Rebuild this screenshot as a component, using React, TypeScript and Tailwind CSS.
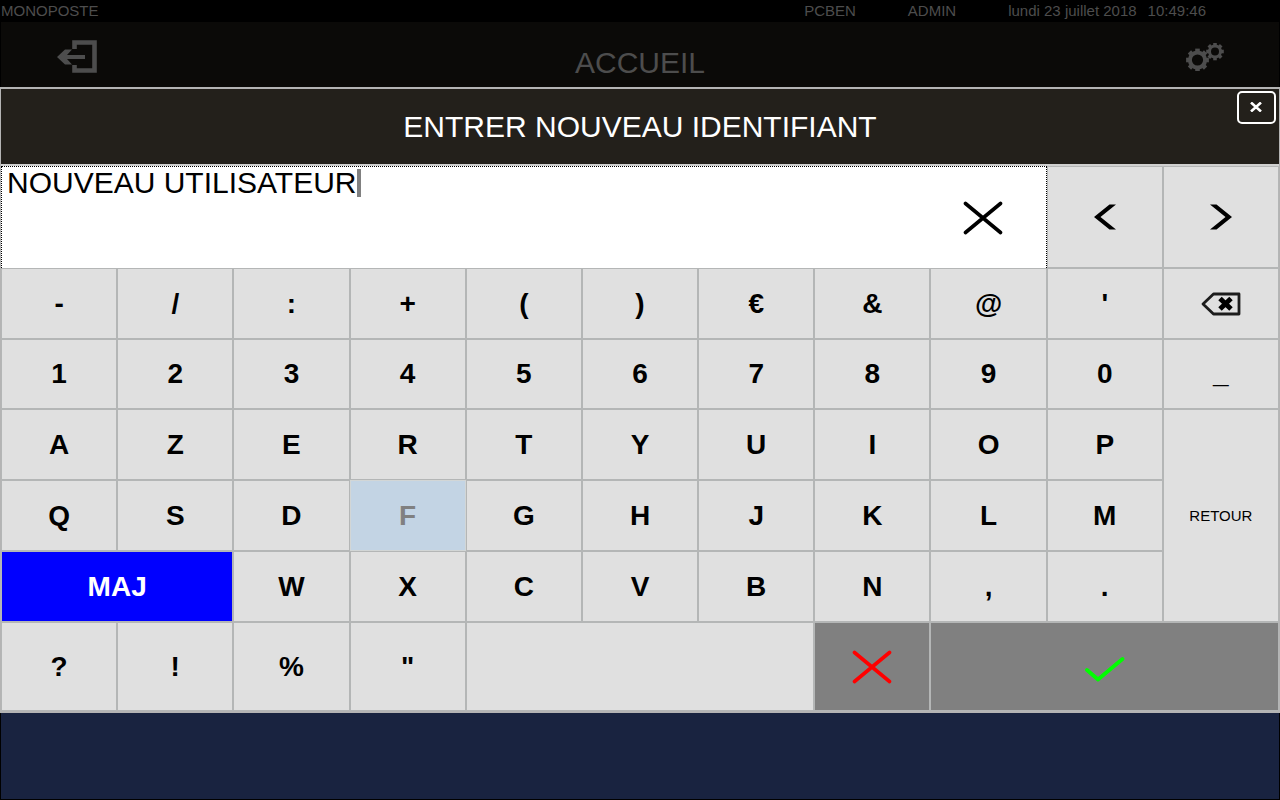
import { useState, type ReactNode } from "react";

type Key = {
  label: string;
  name?: string;
  icon?: ReactNode;
  className?: string;
  tone?: "normal" | "pressed" | "shift" | "dark" | "small";
};

const base = "flex min-w-0 items-center justify-center border leading-8";

const tones = {
  normal: "border-[#b4b6b6] bg-[#e0e0e0] text-[28px] font-bold text-black",
  pressed: "border-[#d2d6d6] bg-[#c3d4e4] text-[28px] font-bold text-[#808080]",
  shift: "border-[#b4b6b6] bg-[#0000ff] text-[28px] font-bold text-white",
  dark: "border-[#b4b6b6] bg-[#808080] text-[28px] font-bold text-white",
  small: "border-[#b4b6b6] bg-[#e0e0e0] text-[15px] font-normal text-black",
};

function CrossIcon({ color }: { color: string }) {
  return (
    <svg width="40" height="34" viewBox="0 0 40 34" fill="none" stroke={color} strokeWidth="3.6" strokeLinecap="round" aria-hidden="true">
      <path d="M2.500 2.500L37.500 31.500M37.500 2.500L2.500 31.500" />
    </svg>
  );
}

function CheckIcon() {
  return (
    <svg width="40" height="34" viewBox="0 0 40 34" fill="none" stroke="#00ff00" strokeWidth="3.8" strokeLinecap="round" strokeLinejoin="round" aria-hidden="true">
      <path d="M2 20L13 29.500L37.500 9" />
    </svg>
  );
}

function BackspaceIcon() {
  return (
    <svg width="40" height="24" viewBox="0 0 40 24" fill="none" aria-hidden="true">
      <path d="M2 12L12.500 2H38V22H12.500Z" stroke="#1c1c1c" strokeWidth="2.800" strokeLinejoin="round" />
      <path d="M19 6.500L30 17M30 6.500L19 17" stroke="#000" strokeWidth="5" />
    </svg>
  );
}

function Chevron({ flipped }: { flipped?: boolean }) {
  return (
    <svg width="22" height="26" viewBox="0 0 22 26" fill="#000" aria-hidden="true">
      <path d={flipped ? "M0 0.500H6.500L22 13L6.500 25.500H0L15.500 13Z" : "M22 0.500H15.500L0 13L15.500 25.500H22L6.500 13Z"} />
    </svg>
  );
}

function ExitIcon() {
  return (
    <svg width="42" height="34" viewBox="0 0 42 34" aria-hidden="true">
      <path d="M18.500 9V2.500H38.500V30.500H18.500V25" fill="none" stroke="#4d4d4d" strokeWidth="4.600" />
      <path d="M1 17L9 9.500H16L11 15H29V19H11L16 24.500H9Z" fill="#4d4d4d" />
    </svg>
  );
}

function Gear({ cx, cy, r, band, tooth }: { cx: number; cy: number; r: number; band: number; tooth: number }) {
  return (
    <g transform={`translate(${cx} ${cy})`}>
      <circle r={r} fill="none" stroke="#4d4d4d" strokeWidth={band} />
      {[0, 45, 90, 135, 180, 225, 270, 315].map((angle) => (
        <rect key={angle} x={-tooth / 2} y={-r - band / 2 - 1.8} width={tooth} height={3} fill="#4d4d4d" transform={`rotate(${angle})`} />
      ))}
    </g>
  );
}

function GearsIcon() {
  return (
    <svg width="38" height="28" viewBox="0 0 38 28" aria-hidden="true">
      <Gear cx={11.5} cy={17} r={7.6} band={4} tooth={4.6} />
      <Gear cx={29} cy={8.5} r={5.5} band={3} tooth={3.6} />
    </svg>
  );
}

const chars = (text: string): Key[] => [...text].map((label) => ({ label }));

const keys: Key[] = [
  ...chars("-/:+()€&@'"),
  { label: "", name: "Effacer", icon: <BackspaceIcon /> },
  ...chars("1234567890_"),
  ...chars("AZERTYUIOP"),
  { label: "RETOUR", tone: "small", className: "row-span-3" },
  ...chars("QSD"),
  { label: "F", tone: "pressed" },
  ...chars("GHJKLM"),
  { label: "MAJ", tone: "shift", className: "col-span-2" },
  ...chars("WXCVBN,."),
  ...chars('?!%"'),
  { label: " ", name: "Espace", className: "col-span-3" },
  { label: "", name: "Annuler", icon: <CrossIcon color="#ff0000" />, tone: "dark" },
  { label: "", name: "Valider", icon: <CheckIcon />, tone: "dark", className: "col-span-3" },
];

export default function App() {
  const [value, setValue] = useState("NOUVEAU UTILISATEUR");

  const press = (key: Key) => {
    if (key.name === "Effacer") setValue(value.slice(0, -1));
    else if (key.label.length === 1) setValue(value + key.label);
  };

  return (
    <div className="flex min-h-screen flex-col bg-black font-['Liberation_Sans',Arial,sans-serif]">
      <div className="flex h-[22px] items-center pr-[74px] pl-px text-[15px] leading-5 text-[#4d4d4d]">
        <span className="mr-auto">MONOPOSTE</span>
        <span>PCBEN</span>
        <span className="ml-[52px]">ADMIN</span>
        <span className="ml-[52px]">lundi 23 juillet 2018</span>
        <span className="ml-[11px]">10:49:46</span>
      </div>

      <header className="mx-px grid h-[65px] grid-cols-[1fr_auto_1fr] items-center bg-[#0b0a08] px-[55px]">
        <button type="button" aria-label="Quitter" className="justify-self-start pt-1">
          <ExitIcon />
        </button>
        <h1 className="pt-4 text-[30px] leading-8 text-[#4d4d4d]">ACCUEIL</h1>
        <button type="button" aria-label="Paramètres" className="justify-self-end pt-1">
          <GearsIcon />
        </button>
      </header>

      <main role="dialog" aria-labelledby="dialog-title" className="border border-t-2 border-b-2 border-[#b4b4b4]">
        <div className="relative flex h-[75px] items-center justify-center bg-[#23201b]">
          <h2 id="dialog-title" className="text-[30px] leading-8 text-white">
            ENTRER NOUVEAU IDENTIFIANT
          </h2>
          <button
            type="button"
            aria-label="Fermer"
            className="absolute top-[2px] right-[3px] flex h-[33px] w-[39px] items-center justify-center rounded-[5px] border-2 border-white pr-[2px] pb-[2px]"
          >
            <svg width="12" height="10" viewBox="0 0 12 10" stroke="#fff" strokeWidth="2.600" aria-hidden="true">
              <path d="M1 0.500L11 9.500M11 0.500L1 9.500" />
            </svg>
          </button>
        </div>

        <div className="grid grid-cols-11 grid-rows-[102px_71px_70px_71px_71px_71px_89px] border-t-2 border-[#d0d0d0] bg-[#b4b6b6]">
          <div className="col-span-9 flex border border-b-0 border-dotted border-black bg-white">
            <div className="flex min-w-0 flex-1 items-start pt-[2px] pl-[5px]">
              <input
                aria-label="Nouvel identifiant"
                value={value}
                onChange={(event) => setValue(event.target.value)}
                className="h-7 max-w-full min-w-0 [field-sizing:content] bg-transparent text-[30px] leading-7 text-black outline-none"
              />
              <span className="h-7 w-1 shrink-0 bg-[#808080]" />
            </div>
            <button type="button" aria-label="Tout effacer" onClick={() => setValue("")} className="flex w-[126px] items-center justify-center">
              <CrossIcon color="#000000" />
            </button>
          </div>
          <button type="button" aria-label="Curseur à gauche" className={`${base} ${tones.normal}`}>
            <Chevron />
          </button>
          <button type="button" aria-label="Curseur à droite" className={`${base} ${tones.normal}`}>
            <Chevron flipped />
          </button>

          {keys.map((key) => (
            <button
              key={key.name ?? key.label}
              type="button"
              aria-label={key.name}
              onClick={() => press(key)}
              className={`${base} ${tones[key.tone ?? "normal"]} ${key.className ?? ""}`}
            >
              {key.icon ?? key.label}
            </button>
          ))}
        </div>
      </main>

      <div className="mx-px mb-px flex-1 bg-[#192340]" />
    </div>
  );
}
